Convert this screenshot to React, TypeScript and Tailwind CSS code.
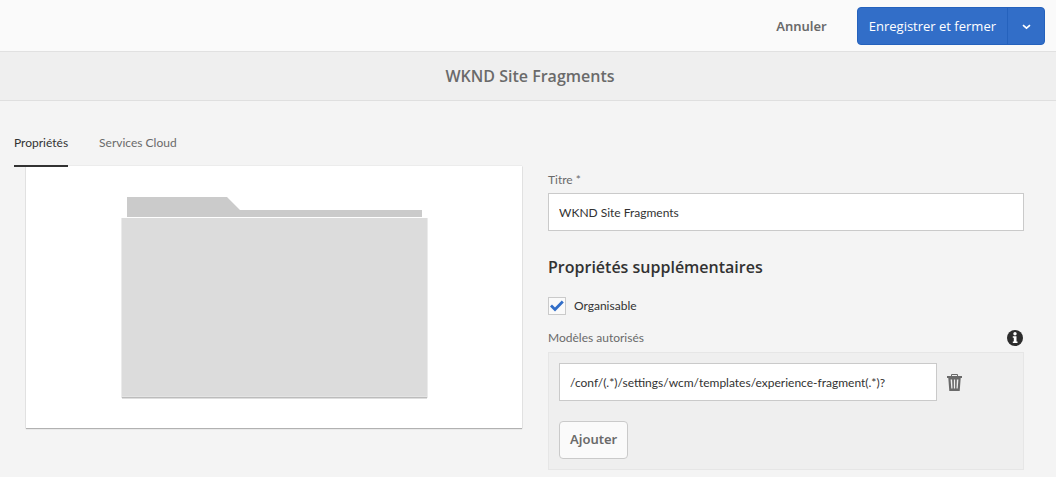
import { useState } from "react";

function FolderArt() {
  return (
    <svg width="306" height="203" viewBox="0 0 306 203" className="overflow-visible" aria-hidden="true">
      <path d="M6 0H106L119 13H301V20H6Z" fill="#cbcbcb" />
      <rect x="0" y="21" width="307" height="180" fill="#ebebeb" />
      <rect x="1" y="21" width="305" height="179" fill="#dcdcdc" />
      <rect x="1" y="199" width="305" height="1" fill="#e4e4e4" />
      <rect x="1" y="200" width="305" height="1" fill="#bcbcbc" />
      <rect x="1" y="201" width="305" height="1" fill="#dedede" />
    </svg>
  );
}

function TrashIcon() {
  return (
    <svg width="16" height="18" viewBox="0 0 16 18" fill="none" aria-hidden="true">
      <path d="M4.500 2.500V.5H10.500V2.500" stroke="#6a6a6a" />
      <path d="M0 2H15V4H0Z" fill="#6a6a6a" />
      <path
        fillRule="evenodd"
        d="M1.300 4H13.700L12.700 17H2.300ZM3.600 5.500L4.300 14.500H5.500L5.100 5.500ZM6.900 5.500V14.500H8.100V5.500ZM9.900 5.500L9.500 14.500H10.700L11.400 5.500Z"
        fill="#6a6a6a"
      />
    </svg>
  );
}

function InfoIcon() {
  return (
    <svg width="16" height="16" viewBox="0 0 16 16" aria-hidden="true">
      <circle cx="8" cy="8" r="8" fill="#2c2c2c" />
      <circle cx="8" cy="3.700" r="1.700" fill="#fff" />
      <path d="M5.800 6.300H9.500V11.500H10.500V13H5.800V11.500H6.800V7.700H5.800Z" fill="#fff" />
    </svg>
  );
}

const field =
  "h-[38px] min-w-0 border border-[#cacaca] bg-white px-2.5 text-xs text-[#323232] outline-none focus:border-[#326ec8]";

export default function App() {
  const [title, setTitle] = useState("WKND Site Fragments");
  const [template, setTemplate] = useState("/conf/(.*)/settings/wcm/templates/experience-fragment(.*)?");
  const [orderable, setOrderable] = useState(true);

  return (
    <div className="min-h-screen bg-[#f4f4f4] font-['Lato','Open_Sans',sans-serif] text-xs text-[#323232]">
      <header className="flex h-13 items-center justify-end border-b border-[#e1e1e1] bg-[#fafafa] pr-[11px] font-['Open_Sans',sans-serif]">
        <button
          type="button"
          className="mr-5 px-2.5 pt-0.5 font-['Noto_Sans',sans-serif] text-[13px] font-semibold text-[#6a6a6a]"
        >
          Annuler
        </button>
        <div className="flex h-[38px] overflow-hidden rounded border border-[#2562bd] bg-[#326ec8] text-white">
          <button type="button" className="px-[11px] pt-0.5 text-[13px]">
            Enregistrer et fermer
          </button>
          <button
            type="button"
            aria-label="Plus d'actions"
            className="flex w-[37px] items-center justify-center border-l border-[#2562bd] pt-0.5"
          >
            <svg width="9" height="6" viewBox="0 0 9 6" fill="none" aria-hidden="true">
              <path d="M1 1.200L4.500 4.200L8 1.200" stroke="#fff" strokeWidth="1.700" />
            </svg>
          </button>
        </div>
      </header>

      <div className="flex h-[49px] items-center justify-center border-b border-[#dfdfdf] bg-[#efefef] pl-1">
        <h1 className="font-['Open_Sans',sans-serif] text-base font-semibold text-[#6a6a6a]">WKND Site Fragments</h1>
      </div>

      <nav className="relative z-10 flex h-[65px] items-end gap-[31px] px-3.5">
        <a href="#proprietes" className="-mb-px border-b-2 border-[#323232] pb-3 leading-5">
          Propriétés
        </a>
        <a href="#cloud" className="-mb-px border-b-2 border-transparent pb-3 leading-5 text-[#6a6a6a]">
          Services Cloud
        </a>
      </nav>

      <main className="grid grid-cols-[496fr_476fr] items-start gap-[26px] pr-8 pl-[26px]">
        <section className="flex justify-center bg-white pt-[31px] pb-7 shadow-[0_1px_1px_rgba(0,0,0,0.25),0_0_1px_rgba(0,0,0,0.2)]">
          <FolderArt />
        </section>

        <form className="flex min-w-0 flex-col" onSubmit={(e) => e.preventDefault()}>
          <label htmlFor="titre" className="pt-1 pb-[3px] leading-5 text-[#6a6a6a]">
            Titre *
          </label>
          <input id="titre" className={field} value={title} onChange={(e) => setTitle(e.target.value)} />

          <h2 className="mt-6 font-['Open_Sans',sans-serif] text-base leading-6 font-semibold text-[#323232]">
            Propriétés supplémentaires
          </h2>

          <label className="mt-[17px] flex items-center gap-2 leading-5">
            <span className="grid size-[18px] place-items-center">
              <input
                type="checkbox"
                checked={orderable}
                onChange={(e) => setOrderable(e.target.checked)}
                className="peer col-start-1 row-start-1 size-[18px] appearance-none border border-[#cacaca] bg-[#fafafa]"
              />
              <svg
                className="pointer-events-none invisible col-start-1 row-start-1 peer-checked:visible"
                width="14"
                height="12"
                viewBox="0 0 14 12"
                fill="none"
                aria-hidden="true"
              >
                <path d="M1 5.600L5 9.600L12.800 1.600" stroke="#326ec8" strokeWidth="2.800" />
              </svg>
            </span>
            Organisable
          </label>

          <div className="mt-3 mb-1 flex items-center justify-between pr-px">
            <label htmlFor="modele" className="leading-5 text-[#6a6a6a]">
              Modèles autorisés
            </label>
            <button type="button" aria-label="Informations">
              <InfoIcon />
            </button>
          </div>
          <div className="border border-[#e6e6e6] bg-[#efefef] p-2.5">
            <div className="mb-5 flex items-center gap-2.5 pr-[50px]">
              <input
                id="modele"
                className={`${field} flex-1`}
                value={template}
                onChange={(e) => setTemplate(e.target.value)}
              />
              <button type="button" aria-label="Supprimer" className="pt-0.5">
                <TrashIcon />
              </button>
            </div>
            <button
              type="button"
              className="h-[38px] rounded border border-[#cacaca] bg-[#fafafa] px-2.5 font-['Noto_Sans',sans-serif] text-[13px] font-semibold text-[#6a6a6a]"
            >
              Ajouter
            </button>
          </div>
        </form>
      </main>
    </div>
  );
}
